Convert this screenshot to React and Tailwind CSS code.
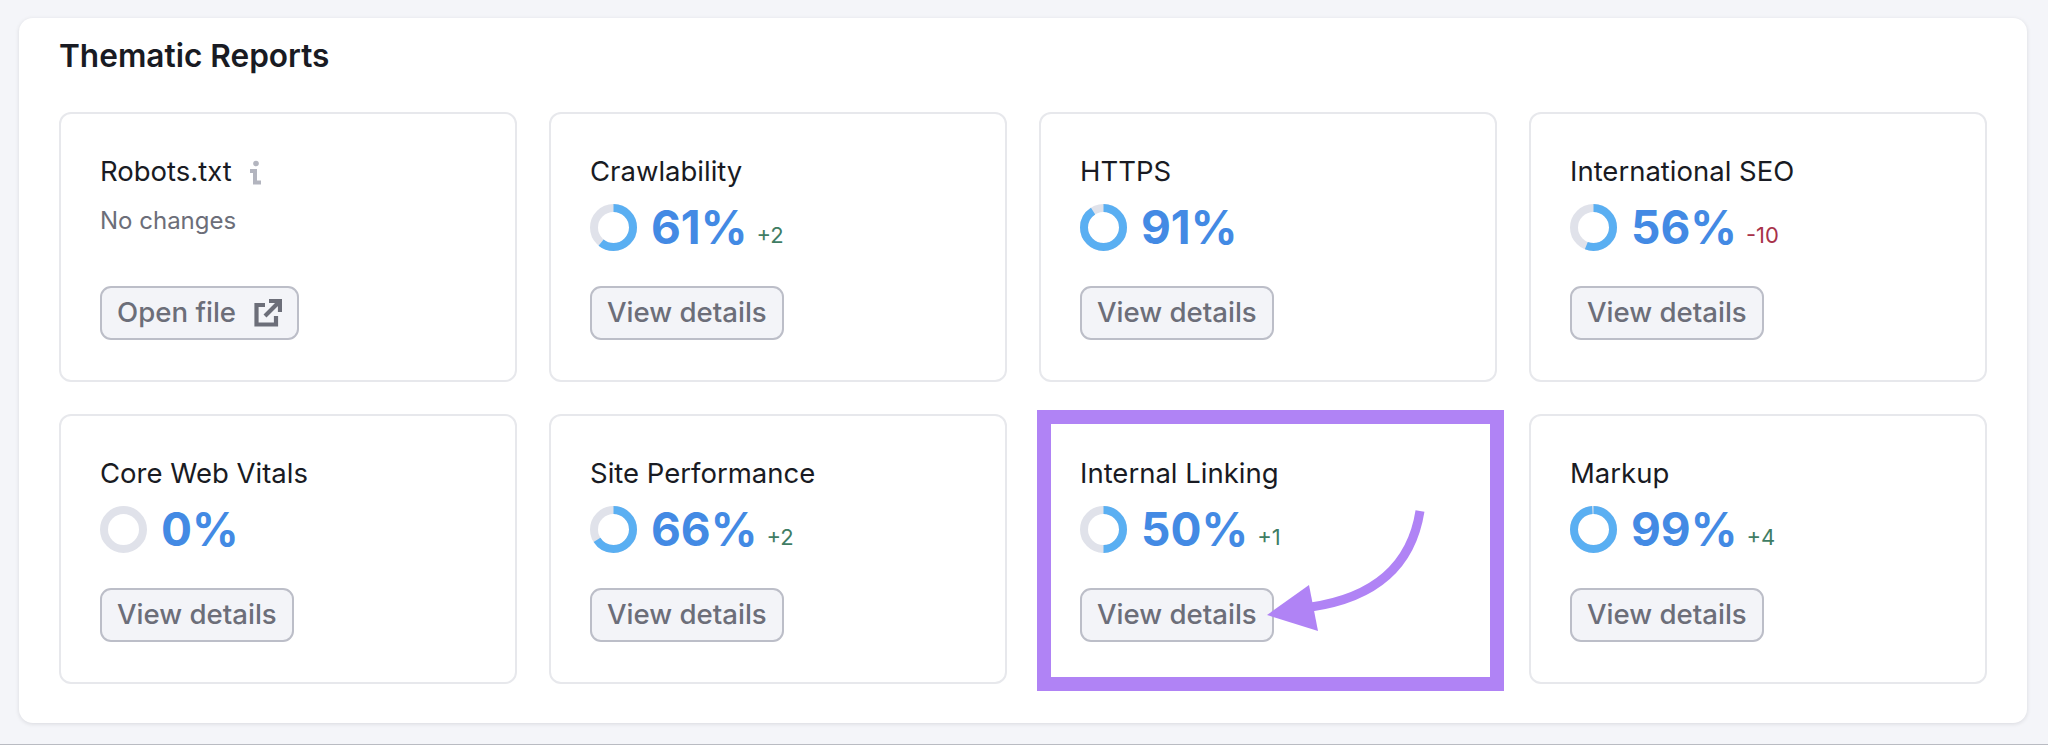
const reports = [
  { name: "Crawlability", score: 61, delta: "+2" },
  { name: "HTTPS", score: 91 },
  { name: "International SEO", score: 56, delta: "-10" },
  { name: "Core Web Vitals", score: 0 },
  { name: "Site Performance", score: 66, delta: "+2" },
  { name: "Internal Linking", score: 50, delta: "+1", highlight: true },
  { name: "Markup", score: 99, delta: "+4" },
];

function Ring({ score }) {
  return (
    <svg width="47" height="47" viewBox="0 0 47 47" className="shrink-0" aria-hidden="true">
      <circle cx="23.5" cy="23.5" r="19.5" fill="none" stroke="#e0e2ea" strokeWidth="8" />
      {score > 0 && (
        <circle
          cx="23.5"
          cy="23.5"
          r="19.5"
          fill="none"
          stroke="#5aaff2"
          strokeWidth="8"
          pathLength="100"
          strokeDasharray={`${score} 100`}
          transform="rotate(-90 23.5 23.5)"
        />
      )}
    </svg>
  );
}

function Button({ children }) {
  return (
    <button className="flex h-[54px] items-center gap-[20px] rounded-[11px] border-2 border-[#bcbec8] bg-[#f3f4f8] px-[15px] text-[27.6px] font-medium text-[#6c6e79]">
      {children}
    </button>
  );
}

function Highlight() {
  return (
    <div className="pointer-events-none absolute -top-[6px] -right-[9px] -bottom-[9px] -left-[4px] border-[14px] border-[#b083f5]">
      <svg width="467" height="280" viewBox="0 0 467 280" className="absolute -top-[12px] -left-[12px]" aria-hidden="true">
        <path d="M381 99C373 150 340 185 272 195" fill="none" stroke="#b083f5" strokeWidth="9" />
        <path d="M228 203L270 173L279 219Z" fill="#b083f5" />
      </svg>
    </div>
  );
}

function Card({ report }) {
  return (
    <div className="relative flex h-[270px] flex-col rounded-[12px] border-2 border-[#e7e8ec] bg-white pt-[39px] pl-[39px]">
      <p className="text-[27.5px] leading-[36px] text-[#191b23]">{report.name}</p>
      <div className="mt-[11px] flex h-[54px] items-center gap-[14px]">
        <Ring score={report.score} />
        <span className="text-[46px] leading-[54px] font-bold text-[#438ae4]">{report.score}%</span>
        {report.delta && (
          <span className={`mt-[15px] -ml-[5px] text-[22px] leading-[28px] ${report.delta[0] === "+" ? "text-[#3f7d64]" : "text-[#a8324a]"}`}>
            {report.delta}
          </span>
        )}
      </div>
      <div className="mt-[32px] flex">
        <Button>View details</Button>
      </div>
      {report.highlight && <Highlight />}
    </div>
  );
}

function RobotsCard() {
  return (
    <div className="flex h-[270px] flex-col rounded-[12px] border-2 border-[#e7e8ec] bg-white pt-[39px] pl-[39px]">
      <div className="flex items-center gap-[16px]">
        <p className="text-[27.5px] leading-[36px] text-[#191b23]">Robots.txt</p>
        <svg width="14" height="26" viewBox="0 0 14 26" className="mt-[3px]" aria-hidden="true">
          <circle cx="8" cy="3.5" r="2.8" fill="#b3b5bf" />
          <path d="M2 11H7V22.5H13" fill="none" stroke="#b3b5bf" strokeWidth="4" />
        </svg>
      </div>
      <p className="mt-[16px] text-[24px] leading-[32px] text-[#6c6e79]">No changes</p>
      <div className="mt-[49px] flex">
        <Button>
          Open file
          <svg width="28" height="28" viewBox="0 0 28 28" className="-ml-[2px]" fill="none" stroke="#6c6e79" strokeWidth="4.2" aria-hidden="true">
            <path d="M11 6H2.5V25.5H22V17" />
            <path d="M11 17L25 3M15 2H26V13" />
          </svg>
        </Button>
      </div>
    </div>
  );
}

export default function App() {
  return (
    <div className="h-[745px] border-b border-[#b9bbc2] bg-[#f4f5f9] pt-[18px] pl-[19px] pr-[21px] font-['Inter',sans-serif]">
      <section className="h-[705px] rounded-[14px] bg-white px-[40px] pt-[20px] shadow-[0_1px_4px_rgba(25,27,35,0.12)]">
        <h2 className="text-[31.6px] leading-[36px] font-semibold text-[#191b23]">Thematic Reports</h2>
        <div className="mt-[38px] grid grid-cols-4 gap-[32px]">
          <RobotsCard />
          {reports.map((report) => (
            <Card key={report.name} report={report} />
          ))}
        </div>
      </section>
    </div>
  );
}
